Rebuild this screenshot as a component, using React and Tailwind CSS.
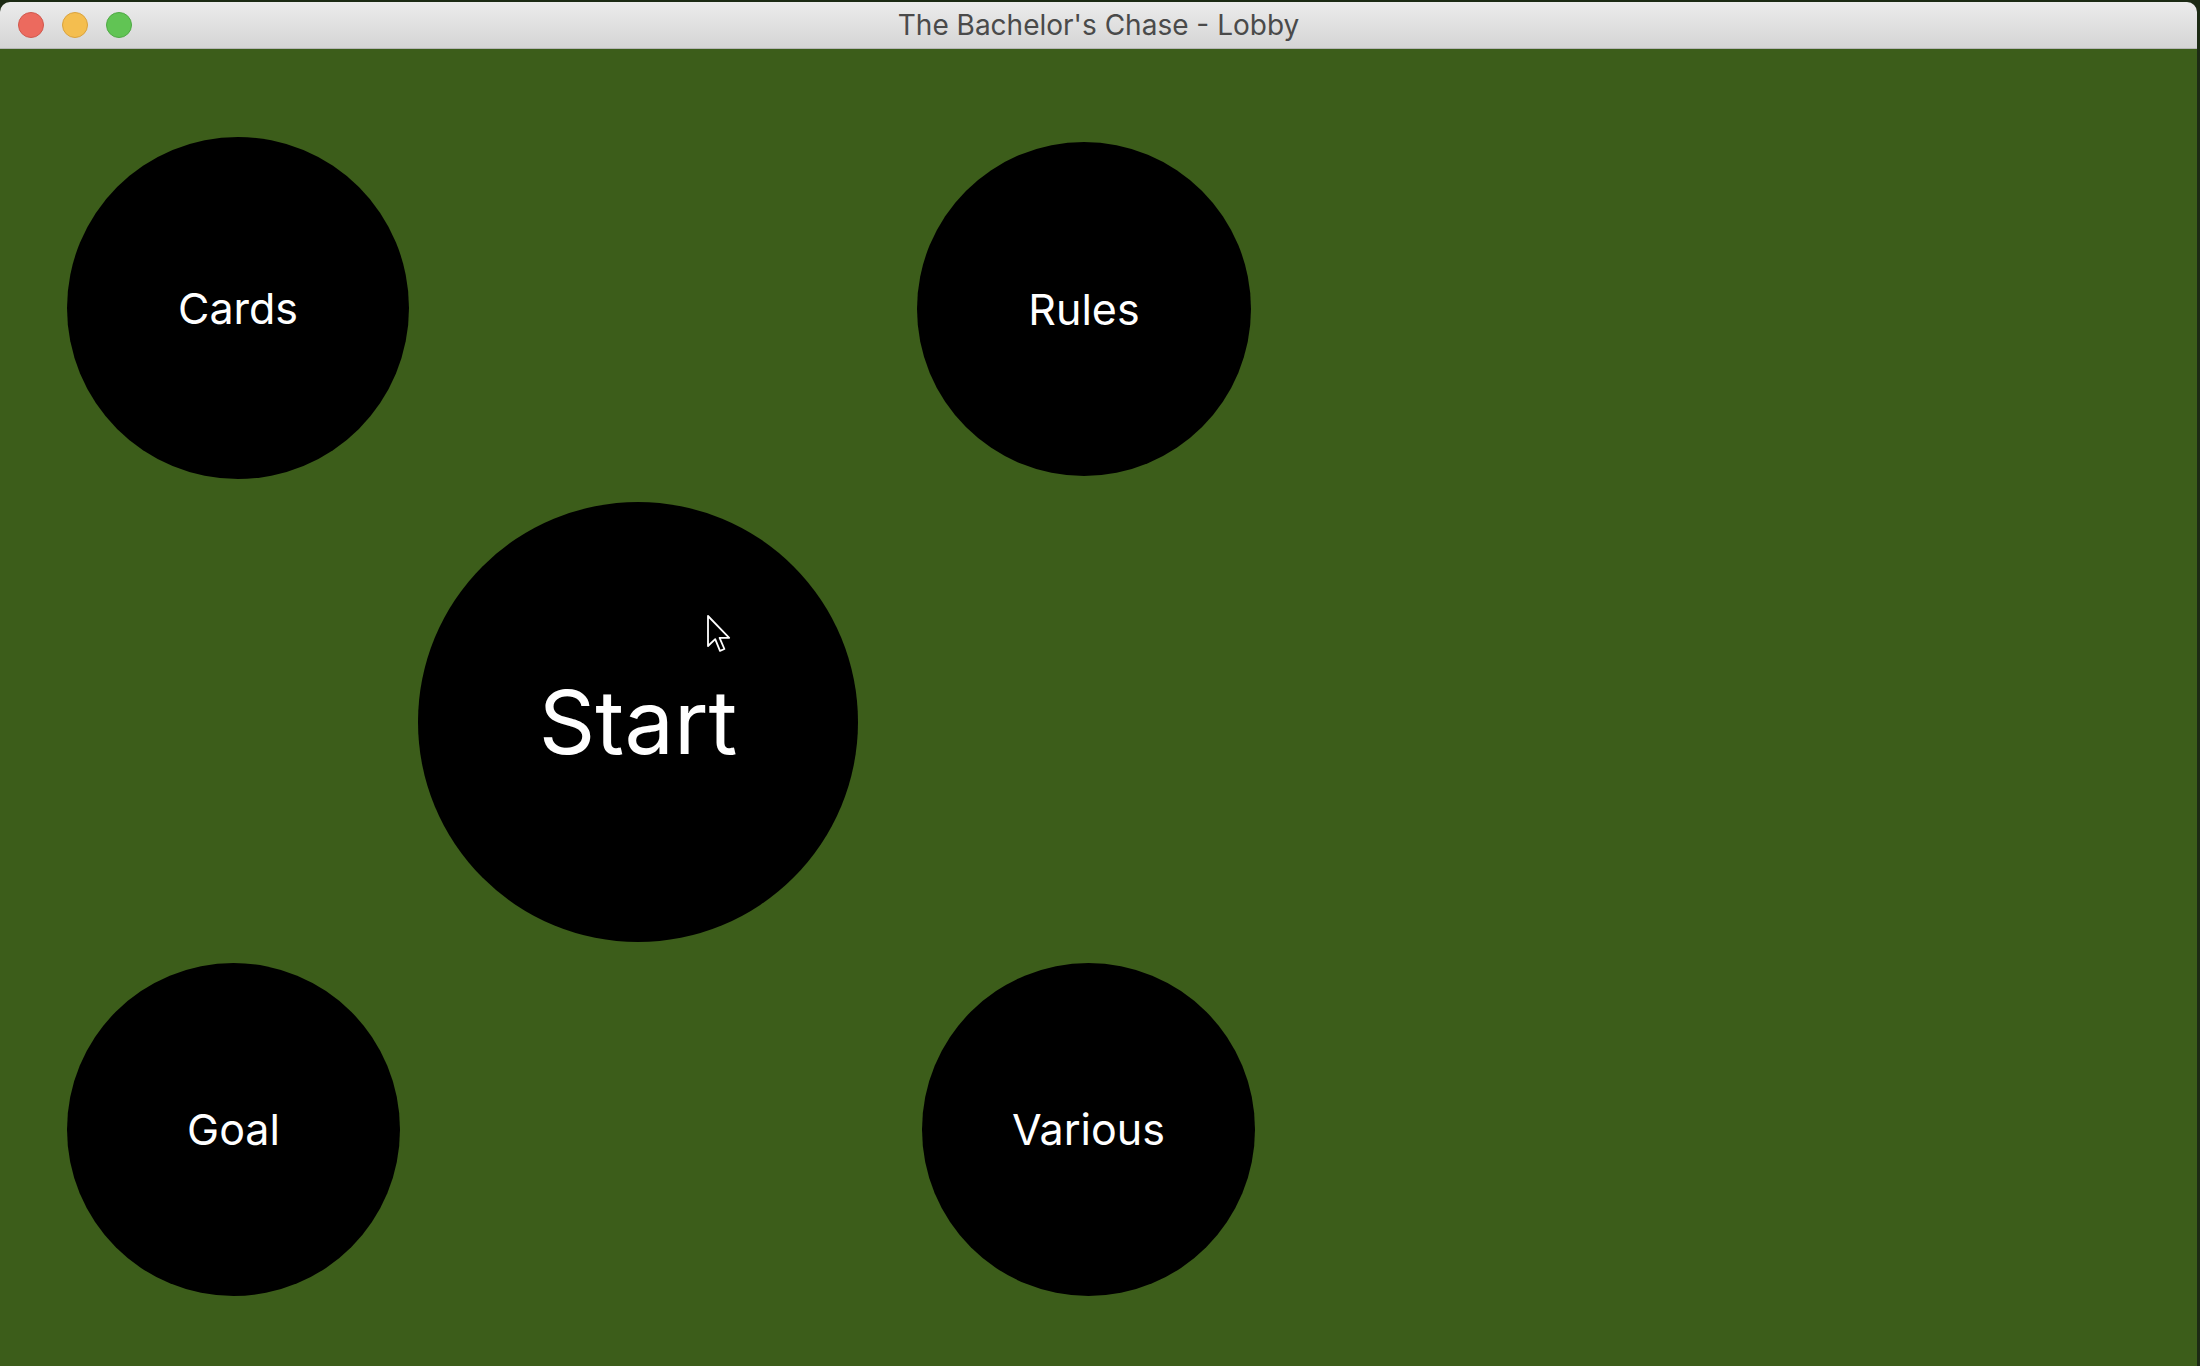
import React from 'react';

const font = { fontFamily: 'Inter, "Liberation Sans", sans-serif' };

const Circle = ({ label, size, big, className = '' }) => (
  <button
    className={`flex items-center justify-center rounded-full bg-black text-white ${size} ${className}`}
    style={font}
  >
    <span className={big ? 'text-[88px] leading-none' : 'text-[43px] leading-none'}>{label}</span>
  </button>
);

const Pointer = () => (
  <svg
    className="absolute left-[706px] top-[565px]"
    width="28"
    height="42"
    viewBox="0 0 14 21"
  >
    <path
      d="M1 1 L1 16 L4.6 12.6 L7 18.4 L9.2 17.5 L6.8 11.9 L11.6 11.9 Z"
      fill="#000"
      stroke="#fff"
      strokeWidth="0.9"
      strokeLinejoin="round"
    />
  </svg>
);

const App = () => {
  return (
    <div className="w-[2200px] h-[1366px] bg-[#1c2a14] overflow-hidden">
      <div className="flex flex-col h-full w-[2197px] mt-[2px] rounded-t-[10px] overflow-hidden">
        {/* title bar */}
        <div className="flex items-center h-[47px] bg-gradient-to-b from-[#ececec] to-[#d5d5d5] border-b border-[#b5b5b5] shrink-0">
          <div className="flex items-center gap-[18px] pl-[18px] w-[132px]">
            <span className="w-[26px] h-[26px] rounded-full bg-[#ec6a5e] border border-[#d0584d]" />
            <span className="w-[26px] h-[26px] rounded-full bg-[#f4be4f] border border-[#d9a23d]" />
            <span className="w-[26px] h-[26px] rounded-full bg-[#61c454] border border-[#4ea943]" />
          </div>
          <div
            className="flex-1 text-center text-[28px] text-[#4a4a4a] pr-[132px]"
            style={font}
          >
            The Bachelor's Chase - Lobby
          </div>
        </div>

        {/* lobby */}
        <div className="relative flex-1 bg-[#3c5d1a] pl-[67px] pt-[88px]">
          <div className="grid grid-cols-[351px_499px_340px] grid-rows-[365px_461px_340px]">
            <Circle label="Cards" size="w-[342px] h-[342px]" />
            <div />
            <Circle label="Rules" size="w-[334px] h-[334px]" className="mt-[5px]" />
            <div />
            <Circle label="Start" size="w-[440px] h-[440px]" big />
            <div />
            <Circle label="Goal" size="w-[333px] h-[333px]" />
            <div />
            <Circle label="Various" size="w-[333px] h-[333px]" className="ml-[5px]" />
          </div>
          <Pointer />
        </div>
      </div>
    </div>
  );
};

export default App;
